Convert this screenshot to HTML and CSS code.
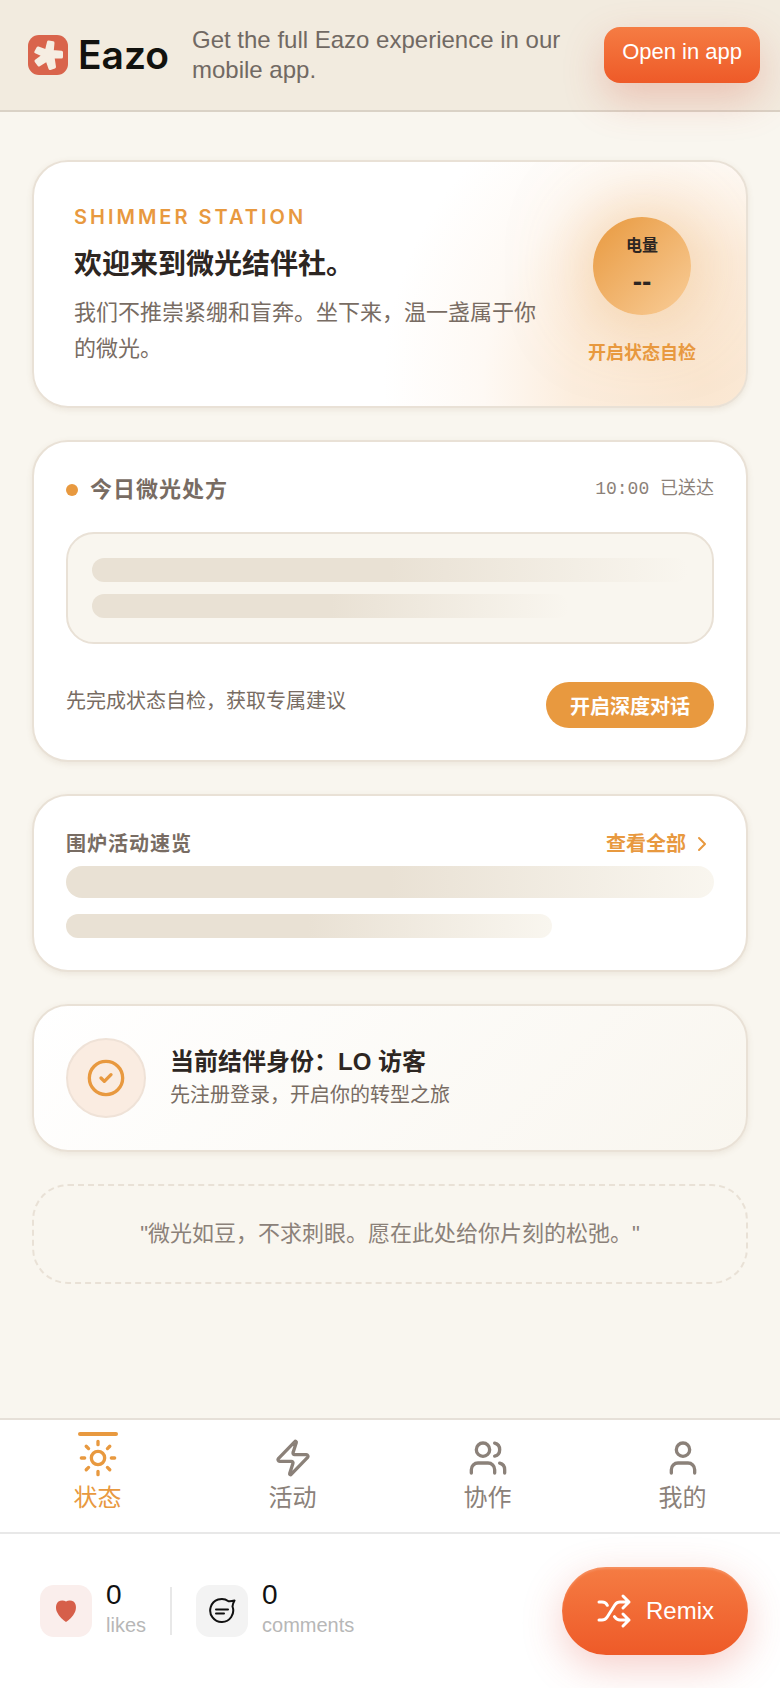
FILE: index.html
```html
<!DOCTYPE html>
<html lang="zh-CN">

<head>
  <meta charset="UTF-8">
  <meta name="viewport" content="width=device-width, initial-scale=1">
  <title>微光结伴社</title>
  <link rel="stylesheet" href="styles.css">
</head>

<body>
  <header class="banner">
    <div class="brand">
      <svg class="brand-mark" viewBox="0 0 40 40" aria-hidden="true">
        <rect width="40" height="40" rx="11" fill="#d9644c"/>
        <g fill="#f6ede2" stroke="#f6ede2" stroke-width="3" stroke-linejoin="round">
          <path d="M20.500 7L25 7.800L24.200 16.500L33.500 17.200L33.500 22L25 22L26.500 32L22 33.500L19 25L11 30L8 26L15.500 20.500L7.800 17L10 13L18.300 16z"/>
        </g>
      </svg>
      <span class="brand-name">Eazo</span>
    </div>
    <p class="banner-text">Get the full Eazo experience in our mobile app.</p>
    <button class="open-btn" type="button">Open in app</button>
  </header>

  <main class="content">
    <section class="card hero">
      <div class="hero-text">
        <p class="eyebrow">SHIMMER STATION</p>
        <h1>欢迎来到微光结伴社。</h1>
        <p class="lead">我们不推崇紧绷和盲奔。坐下来，温一盏属于你的微光。</p>
      </div>
      <button class="check-in" type="button">
        <span class="orb"><span>电量</span><strong>--</strong></span>
        <span class="check-in-label">开启状态自检</span>
      </button>
    </section>

    <section class="card">
      <div class="row recipe-head">
        <h2 class="dotted">今日微光处方</h2>
        <span class="mono">10:00 已送达</span>
      </div>
      <div class="recipe-box">
        <div class="bar"></div>
        <div class="bar bar-80"></div>
      </div>
      <div class="row recipe-foot">
        <span class="note">先完成状态自检，获取专属建议</span>
        <button class="pill" type="button">开启深度对话</button>
      </div>
    </section>

    <section class="card">
      <div class="row events-head">
        <h2>围炉活动速览</h2>
        <a class="more" href="#">查看全部
          <svg width="24" height="24" viewBox="0 0 24 24" class="icon"><path d="m9 18 6-6-6-6"/></svg>
        </a>
      </div>
      <div class="bar bar-tall"></div>
      <div class="bar bar-75"></div>
    </section>

    <section class="card identity">
      <div class="avatar">
        <svg width="40" height="40" viewBox="0 0 24 24" class="icon"><circle cx="12" cy="12" r="10"/><path d="m9 12 2 2 4-4"/></svg>
      </div>
      <div>
        <h3>当前结伴身份：LO 访客</h3>
        <p class="note">先注册登录，开启你的转型之旅</p>
      </div>
    </section>

    <p class="quote">"微光如豆，不求刺眼。愿在此处给你片刻的松弛。"</p>
  </main>

  <nav class="tabs">
    <a class="tab active" href="#">
      <svg width="40" height="40" viewBox="0 0 24 24" class="icon"><circle cx="12" cy="12" r="4"/><path d="M12 2v2M12 20v2M4.930 4.930l1.410 1.410M17.660 17.660l1.410 1.410M2 12h2M20 12h2M6.340 17.660l-1.410 1.410M19.070 4.930l-1.410 1.410"/></svg>
      状态
    </a>
    <a class="tab" href="#">
      <svg width="40" height="40" viewBox="0 0 24 24" class="icon"><path d="M4 14a1 1 0 0 1-.78-1.630l9.900-10.200a.5.5 0 0 1 .86.460l-1.920 6.020A1 1 0 0 0 13 10h7a1 1 0 0 1 .78 1.630l-9.900 10.200a.5.5 0 0 1-.86-.46l1.920-6.020A1 1 0 0 0 11 14z"/></svg>
      活动
    </a>
    <a class="tab" href="#">
      <svg width="40" height="40" viewBox="0 0 24 24" class="icon"><path d="M16 21v-2a4 4 0 0 0-4-4H6a4 4 0 0 0-4 4v2"/><circle cx="9" cy="7" r="4"/><path d="M22 21v-2a4 4 0 0 0-3-3.870M16 3.130a4 4 0 0 1 0 7.750"/></svg>
      协作
    </a>
    <a class="tab" href="#">
      <svg width="40" height="40" viewBox="0 0 24 24" class="icon"><path d="M19 21v-2a4 4 0 0 0-4-4H9a4 4 0 0 0-4 4v2"/><circle cx="12" cy="7" r="4"/></svg>
      我的
    </a>
  </nav>

  <footer class="actions">
    <button class="stat likes" type="button">
      <span class="stat-icon">
        <svg width="28" height="28" viewBox="0 0 28 28"><path fill="#d65f4a" d="M14 4.500C12 3 8.500 3 6.500 4.500C3.500 7 3.500 11.500 5 15C7 19.500 11 23 14 25C17 23 21 19.500 23 15C24.500 11.500 24.500 7 21.500 4.500C19.500 3 16 3 14 4.500z"/></svg>
      </span>
      <span class="stat-text"><b>0</b><small>likes</small></span>
    </button>
    <span class="divider"></span>
    <button class="stat" type="button">
      <span class="stat-icon">
        <svg width="28" height="28" viewBox="0 0 28 28" fill="none" stroke="#111" stroke-width="2" stroke-linecap="round" stroke-linejoin="round"><path d="M20.500 4.200A11.500 11.500 0 1 0 24.500 9.500Q25 6 26.500 3.500Q23 4.500 20.500 4.200M8 12.500h12M8 16.500h8"/></svg>
      </span>
      <span class="stat-text"><b>0</b><small>comments</small></span>
    </button>
    <button class="remix" type="button">
      <svg width="36" height="36" viewBox="0 0 24 24" class="icon"><path d="m18 14 4 4-4 4M18 2l4 4-4 4M2 18h1.970a4 4 0 0 0 3.300-1.700l5.450-8.600a4 4 0 0 1 3.300-1.700H22M2 6h1.970a4 4 0 0 1 3.600 2.200M22 18h-6.040a4 4 0 0 1-3.300-1.800l-.36-.45"/></svg>
      Remix
    </button>
  </footer>
</body>
</html>
```
FILE: styles.css
```css
:root {
  --bg: #f9f6ef;
  --line: #e9e1d6;
  --accent: #e8993f;
  --ink: #2d2622;
  --muted: #786c63;
  --soft: #8b8179;
}
* {
  box-sizing: border-box;
  margin: 0;
}
body {
  display: flex;
  flex-direction: column;
  min-height: 100vh;
  background: var(--bg);
  color: var(--ink);
  font-family: "Liberation Sans", "Noto Sans CJK SC", sans-serif;
  font-size: 22px;
}
button {
  border: none;
  background: none;
  padding: 0;
  color: inherit;
  font: inherit;
  cursor: pointer;
}
a {
  color: inherit;
  text-decoration: none;
}
.icon {
  fill: none;
  stroke: currentColor;
  stroke-width: 2;
  stroke-linecap: round;
  stroke-linejoin: round;
}

/* app banner */
.banner {
  position: relative;
  z-index: 1;
  display: flex;
  align-items: center;
  gap: 20px;
  height: 112px;
  padding: 0 20px 0 28px;
  background: #f2ebdf;
  border-bottom: 2px solid #dad2c6;
}
.brand {
  display: flex;
  align-items: center;
  gap: 10px;
  min-width: 144px;
}
.brand-mark {
  width: 40px;
  height: 40px;
}
.brand-name {
  font-family: Inter, sans-serif;
  font-size: 39px;
  font-weight: 600;
  line-height: 40px;
  color: #12120e;
}
.banner-text {
  flex: 1;
  font-size: 24px;
  line-height: 30px;
  color: #716963;
}
.open-btn {
  flex: none;
  height: 56px;
  padding: 0 18px 6px;
  border-radius: 16px;
  background: linear-gradient(#f57c43, #ee5a28);
  box-shadow: 0 16px 40px rgba(214, 90, 70, .28);
  color: #fff;
}

/* cards */
.content {
  flex: 1;
  display: flex;
  flex-direction: column;
  gap: 32px;
  padding: 48px 32px;
}
.card {
  padding: 32px;
  border: 2px solid var(--line);
  border-radius: 36px;
  background: #fff;
  box-shadow: 0 2px 6px rgba(120, 90, 50, .1);
}
.row {
  display: flex;
  justify-content: space-between;
}
h2 {
  font-size: 20px;
  line-height: 32px;
  letter-spacing: 1px;
  color: var(--muted);
}
.note {
  font-size: 20px;
  line-height: 32px;
  color: var(--muted);
}

.hero {
  display: flex;
  align-items: center;
  gap: 32px;
  height: 248px;
  padding: 40px;
  overflow: hidden;
  background: radial-gradient(circle at 94% 90%, #fae6d0 0, #fceddd 130px, #fef9f4 220px, #fff 320px);
}
.hero-text {
  flex: 1;
  padding-top: 2px;
}
.eyebrow {
  font-family: Inter, sans-serif;
  font-size: 20px;
  font-weight: 600;
  line-height: 28px;
  letter-spacing: 3px;
  color: var(--accent);
}
h1 {
  margin: 14px 0 10px;
  font-size: 28px;
  line-height: 40px;
}
.lead {
  line-height: 36px;
  color: var(--muted);
}
.check-in {
  display: flex;
  flex-direction: column;
  align-items: center;
  gap: 24px;
  width: 128px;
  padding-top: 16px;
}
.orb {
  display: flex;
  flex-direction: column;
  align-items: center;
  justify-content: center;
  gap: 4px;
  width: 98px;
  height: 98px;
  padding-top: 4px;
  border-radius: 50%;
  background: linear-gradient(135deg, #e8993f, #f9cd98);
  box-shadow: 0 0 80px rgba(232, 153, 63, .5);
  font-size: 16px;
  font-weight: bold;
  line-height: 24px;
}
.orb strong {
  font-size: 28px;
  line-height: 40px;
}
.check-in-label {
  font-size: 18px;
  font-weight: bold;
  line-height: 28px;
  color: var(--accent);
}

/* today's recipe */
.recipe-head {
  margin-bottom: 26px;
}
.dotted {
  display: flex;
  align-items: center;
  gap: 12px;
  font-size: 22px;
}
.dotted::before {
  content: "";
  width: 12px;
  height: 12px;
  border-radius: 50%;
  background: var(--accent);
}
.mono {
  font-family: "Liberation Mono", "Noto Sans CJK SC", monospace;
  font-size: 18px;
  line-height: 30px;
  color: var(--soft);
}
.recipe-box {
  display: flex;
  flex-direction: column;
  gap: 12px;
  margin-bottom: 38px;
  padding: 24px;
  border: 2px solid var(--line);
  border-radius: 28px;
  background: var(--bg);
}
.bar {
  height: 24px;
  border-radius: 12px;
  background: linear-gradient(90deg, #e9e1d4 50%, #f9f6ef);
}
.bar-80 {
  width: 80%;
}
.bar-tall {
  height: 32px;
  border-radius: 16px;
  margin-bottom: 16px;
}
.bar-75 {
  width: 75%;
}
.recipe-foot .note {
  line-height: 38px;
}
.pill {
  height: 46px;
  padding: 0 24px;
  border-radius: 24px;
  background: var(--accent);
  color: #fff;
  font-size: 20px;
  font-weight: bold;
}

/* events */
.events-head {
  margin-bottom: 6px;
}
.more {
  display: flex;
  align-items: center;
  gap: 4px;
  font-size: 20px;
  font-weight: bold;
  line-height: 32px;
  color: var(--accent);
}

/* identity */
.identity {
  display: flex;
  align-items: center;
  gap: 24px;
  background: linear-gradient(135deg, #fff, #f9f6ef);
}
.avatar {
  display: flex;
  align-items: center;
  justify-content: center;
  width: 80px;
  height: 80px;
  border: 2px solid #efe2d7;
  border-radius: 50%;
  background: #faece1;
  color: var(--accent);
}
h3 {
  font-size: 24px;
  line-height: 34px;
}
.quote {
  padding: 30px;
  border: 2px dashed var(--line);
  border-radius: 36px;
  line-height: 36px;
  text-align: center;
  color: var(--soft);
}

/* bottom tabs */
.tabs {
  display: flex;
  height: 114px;
  border-top: 2px solid #e6e0d8;
  background: #fff;
}
.tab {
  position: relative;
  flex: 1;
  display: flex;
  flex-direction: column;
  align-items: center;
  padding-top: 18px;
  font-size: 24px;
  line-height: 40px;
  color: var(--soft);
}
.tab.active {
  color: var(--accent);
}
.tab.active::before {
  content: "";
  position: absolute;
  top: 12px;
  width: 40px;
  height: 4px;
  border-radius: 2px;
  background: var(--accent);
}

/* actions */
.actions {
  display: flex;
  align-items: center;
  height: 156px;
  padding: 0 32px 0 40px;
  border-top: 2px solid #e8e8e8;
  background: #fff;
}
.stat {
  display: flex;
  align-items: center;
  gap: 14px;
  text-align: left;
}
.divider {
  width: 2px;
  height: 48px;
  margin: 0 24px;
  background: #e8e8e8;
}
.stat-icon {
  display: flex;
  align-items: center;
  justify-content: center;
  width: 52px;
  height: 52px;
  border-radius: 14px;
  background: #f3f3f3;
}
.likes .stat-icon {
  background: #faeeec;
}
.stat-text {
  display: flex;
  flex-direction: column;
  padding-bottom: 4px;
}
.stat-text b {
  font-size: 28px;
  font-weight: normal;
  line-height: 32px;
  color: #111;
}
.stat-text small {
  font-size: 20px;
  line-height: 28px;
  color: #b7b7b7;
}
.remix {
  display: flex;
  align-items: center;
  gap: 14px;
  height: 88px;
  margin-left: auto;
  padding: 0 34px;
  border-radius: 44px;
  background: linear-gradient(#f57c43, #ee5a28);
  box-shadow: 0 12px 40px rgba(224, 80, 60, .28), inset 0 2px 2px rgba(255, 255, 255, .15);
  color: #fff;
  font-size: 24px;
}
```
